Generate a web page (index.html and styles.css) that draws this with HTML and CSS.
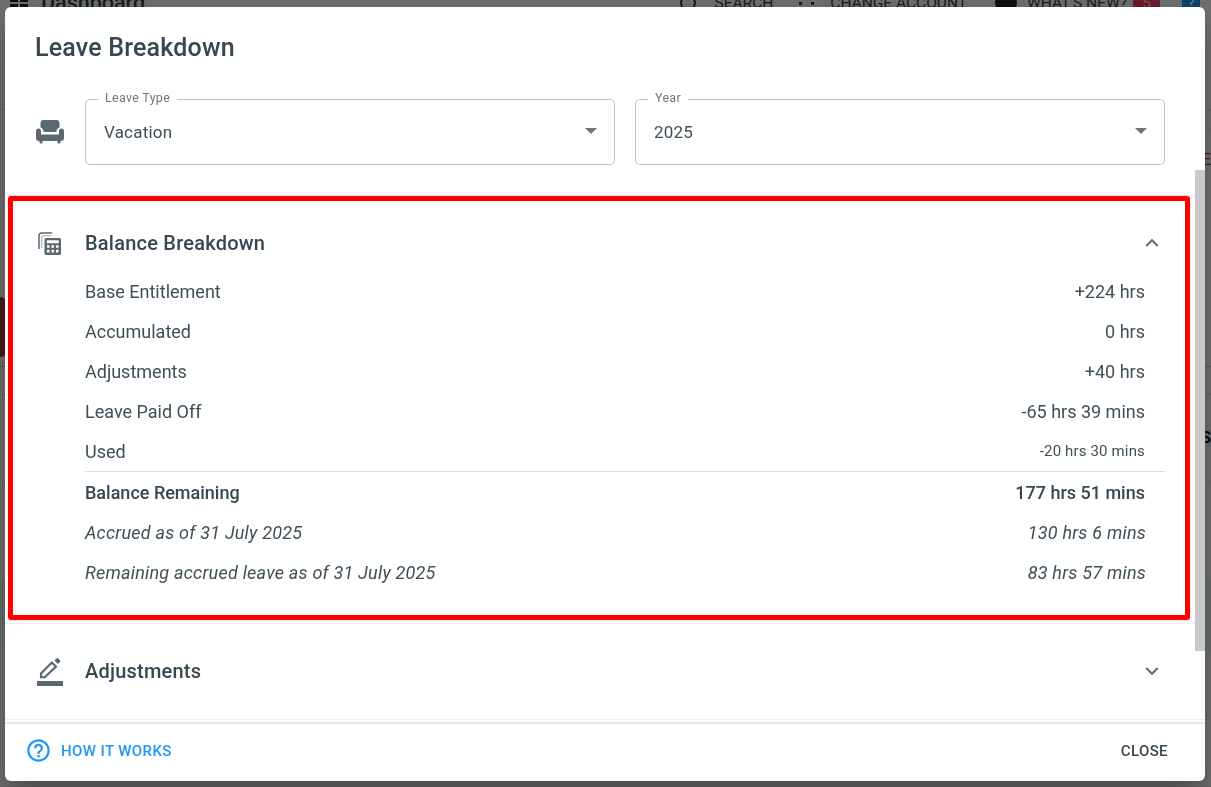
FILE: index.html
```html
<!DOCTYPE html>
<html lang="en">
<head>
<meta charset="utf-8">
<title>Leave Breakdown</title>
<link rel="stylesheet" href="styles.css">
</head>
<body>
<div class="page">
  <header class="topbar">
    <div class="brand">
      <svg class="brand-icon" viewBox="0 0 24 24"><path d="M3 3h8v8H3zM13 3h8v3h-8zM13 8h8v3h-8zM3 13h8v8H3zM13 13h8v8h-8z"/></svg>
      <span class="brand-name">Dashboard</span>
    </div>
    <nav class="top-nav">
      <span class="nav-item"><span class="ring"></span>SEARCH</span>
      <span class="nav-item"><span class="dots"></span>CHANGE ACCOUNT</span>
      <span class="nav-item"><span class="bell"></span>WHAT'S NEW?<span class="badge">5</span></span>
      <span class="help-square">?</span>
    </nav>
  </header>
  <div class="page-body">
    <div class="strip strip-a"></div>
    <div class="strip strip-b"><span class="blob"></span><span class="edge-letter">E</span></div>
    <div class="strip strip-c"></div>
    <div class="strip strip-d"><span class="edge-letter dark">S</span></div>
    <div class="strip strip-e"></div>
  </div>
</div>
<div class="backdrop"></div>

<section class="dialog">
  <h1 class="dialog-title">Leave Breakdown</h1>
  <div class="dialog-body">
    <div class="filters">
      <svg class="lead-icon" viewBox="0 0 30 30">
        <path d="M8.500 3h13a3 3 0 0 1 3 3v4.600a4.500 4.500 0 0 0-3 4.200v.2h-13v-.2a4.500 4.500 0 0 0-3-4.200V6a3 3 0 0 1 3-3z"/>
        <path d="M3.500 11.500A2.500 2.500 0 0 1 6 14v3.500h18V14a2.500 2.500 0 0 1 5 0v7a3 3 0 0 1-3 3h-.5v1.500a1 1 0 0 1-1 1h-1a1 1 0 0 1-1-1V24H7.500v1.500a1 1 0 0 1-1 1h-1a1 1 0 0 1-1-1V24H4a3 3 0 0 1-3-3v-7a2.500 2.500 0 0 1 2.500-2.500z"/>
      </svg>
      <div class="field">
        <span class="field-label">Leave Type</span>
        <span class="field-value">Vacation</span>
        <span class="caret"></span>
      </div>
      <div class="field">
        <span class="field-label">Year</span>
        <span class="field-value">2025</span>
        <span class="caret"></span>
      </div>
    </div>

    <div class="section">
      <div class="section-head open">
        <svg class="lead-icon calc" viewBox="0 0 26 26">
          <path class="calc-back" d="M15 3H4.500A2.500 2.500 0 0 0 2 5.500V19"/>
          <path class="calc-back thin" d="M14 5.800H6A1.200 1.200 0 0 0 4.800 7v11"/>
          <path fill-rule="evenodd" d="M9 8h13.500A1.500 1.500 0 0 1 24 9.500v14a1.500 1.500 0 0 1-1.500 1.500H9a1.500 1.500 0 0 1-1.500-1.500v-14A1.500 1.500 0 0 1 9 8zM9.800 10.200v3h12v-3zM10 15.200v2.500h2.500v-2.500zM14.500 15.200v2.500H17v-2.500zM19 15.200v2.500h2.500v-2.500zM10 19.700v2.800h2.500v-2.800zM14.500 19.700v2.800H17v-2.800zM19 19.700v2.800h2.500v-2.800z"/>
        </svg>
        <h2 class="section-title">Balance Breakdown</h2>
        <svg class="chevron" viewBox="0 0 24 24"><path d="M12 8l-6 6 1.410 1.410L12 10.830l4.590 4.580L18 14z"/></svg>
      </div>
      <div class="rows">
        <div class="row"><span>Base Entitlement</span><span>+224 hrs</span></div>
        <div class="row"><span>Accumulated</span><span>0 hrs</span></div>
        <div class="row"><span>Adjustments</span><span>+40 hrs</span></div>
        <div class="row"><span>Leave Paid Off</span><span>-65 hrs 39 mins</span></div>
        <div class="row"><span>Used</span><span class="small">-20 hrs 30 mins</span></div>
        <div class="row total"><span>Balance Remaining</span><span>177 hrs 51 mins</span></div>
        <div class="row note"><span>Accrued as of 31 July 2025</span><span>130 hrs 6 mins</span></div>
        <div class="row note"><span>Remaining accrued leave as of 31 July 2025</span><span>83 hrs 57 mins</span></div>
      </div>
    </div>

    <div class="section">
      <div class="section-head closed">
        <svg class="lead-icon" viewBox="0 0 24 24">
          <path d="M22.400 24H1.600v-4h20.800z"/>
          <path class="pen-outline" d="M13.500 5.200l3.300 3.300L7.800 17H4.800v-3z"/>
          <path d="M15.500 3.500l1.600-1.600a1 1 0 0 1 1.400 0l1.500 1.500a1 1 0 0 1 0 1.400l-1.600 1.600z"/>
        </svg>
        <h2 class="section-title">Adjustments</h2>
        <svg class="chevron" viewBox="0 0 24 24"><path d="M16.590 8.590L12 13.170 7.410 8.590 6 10l6 6 6-6z"/></svg>
      </div>
    </div>
  </div>
  <footer class="dialog-foot">
    <span class="how">
      <svg class="how-icon" viewBox="0 0 24 24"><path d="M11 18h2v-2h-2v2zm1-16C6.480 2 2 6.480 2 12s4.480 10 10 10 10-4.480 10-10S17.520 2 12 2zm0 18c-4.410 0-8-3.590-8-8s3.590-8 8-8 8 3.590 8 8-3.590 8-8 8zm0-14c-2.210 0-4 1.790-4 4h2c0-1.100.9-2 2-2s2 .9 2 2c0 2-3 1.750-3 5h2c0-2.250 3-2.500 3-5 0-2.210-1.790-4-4-4z"/></svg>
      HOW IT WORKS
    </span>
    <span class="close">CLOSE</span>
  </footer>
  <div class="scroll-thumb"></div>
  <div class="annotation"></div>
</section>
</body>
</html>
```
FILE: styles.css
```css
* { box-sizing: border-box; }
html, body { height: 100%; }
body {
  margin: 0;
  overflow: hidden;
  font-family: Roboto, "Liberation Sans", sans-serif;
  color: #37474f;
  background: #e2e2e2;
}
.page { display: flex; flex-direction: column; height: 787px; }
.topbar {
  display: flex;
  justify-content: space-between;
  align-items: center;
  height: 122px;
  margin-top: -12px;
  padding: 0 11px 92px 7px;
  border-bottom: 1px solid #c8c8c8;
  color: #2b3a42;
}
.brand { display: flex; align-items: center; gap: 10px; }
.brand-icon { width: 24px; height: 24px; fill: #16222a; }
.brand-name { font-size: 21.500px; font-weight: 500; }
.top-nav { display: flex; align-items: center; font-size: 15.500px; }
.nav-item { display: flex; align-items: center; gap: 18px; margin-right: 26px; }
.nav-item:nth-child(2) { gap: 16px; margin-right: 28px; }
.nav-item:nth-child(3) { gap: 10px; margin-right: 22px; }
.ring { width: 16px; height: 16px; border: 2px solid #2b3a42; border-radius: 50%; }
.dots { width: 15px; height: 16px; border-left: 3px dotted #2b3a42; border-right: 3px dotted #2b3a42; }
.bell { width: 22px; height: 18px; border-radius: 9px; background: #16222a; }
.badge { width: 27px; padding: 2px 0; margin-left: -4px; text-align: center; border-radius: 4px; color: #f3b3c0; background: #e0315c; }
.help-square { width: 18px; height: 18px; text-align: center; line-height: 18px; border-radius: 3px; color: #fff; background: #1a88d8; }

.page-body { display: flex; flex-direction: column; flex: 1; }
.strip { display: flex; justify-content: space-between; align-items: flex-start; border-bottom: 1px solid #d0d0d0; }
.strip-a { height: 20px; }
.strip-b { height: 237px; padding-top: 21px; border-bottom-color: #b8b8b8; }
.strip-c { height: 28px; border-bottom-color: #c8c8c8; }
.strip-d { height: 87px; align-items: center; justify-content: flex-end; }
.strip-e { flex: 1; background: linear-gradient(#e2e2e2 98px, #cfe0d8 98px, #cfe0d8 168px, #e2e2e2 168px); }
.edge-letter { font-size: 16px; line-height: 18px; color: #b02030; }
.edge-letter.dark { color: #111; font-weight: 700; }
.blob { width: 6px; height: 60px; margin-top: 146px; border-radius: 0 12px 12px 0; background: #943434; }

.backdrop { position: fixed; inset: 0; background: rgba(0, 0, 0, .5); }

.dialog {
  position: fixed;
  left: 5px;
  top: 7px;
  width: 1200px;
  height: 774px;
  display: flex;
  flex-direction: column;
  overflow: hidden;
  border-radius: 6px;
  background: #fff;
  box-shadow: 0 11px 15px -7px rgba(0,0,0,.2), 0 24px 38px 3px rgba(0,0,0,.14), 0 9px 46px 8px rgba(0,0,0,.12);
}
.dialog-title {
  flex: none;
  margin: 0;
  padding: 24px 30px 17px;
  font-size: 25px;
  line-height: 34px;
  font-weight: 500;
  letter-spacing: .2px;
}
.dialog-body { flex: 1; min-height: 0; overflow: hidden; padding-top: 17px; }

.filters { display: flex; align-items: center; gap: 20px; padding: 0 40px 30px 30px; border-bottom: 1px solid #eee; }
.lead-icon { flex: none; width: 30px; height: 30px; fill: #5c6870; }
.field {
  position: relative;
  flex: 1;
  display: flex;
  align-items: center;
  height: 66px;
  padding: 0 18px;
  border: 1px solid #c4c4c4;
  border-radius: 5px;
}
.field-label {
  position: absolute;
  left: 12px;
  top: -9px;
  padding: 0 7px;
  font-size: 12.500px;
  line-height: 14px;
  letter-spacing: .3px;
  color: #757575;
  background: #fff;
}
.field-value { font-size: 17px; letter-spacing: .2px; color: #3f4f57; }
.caret {
  position: absolute;
  right: 17px;
  top: 28px;
  border-left: 6px solid transparent;
  border-right: 6px solid transparent;
  border-top: 6px solid #757575;
}

.section { border-bottom: 1px solid #eee; padding: 0 40px 0 30px; }
.section-head { display: flex; align-items: center; gap: 20px; padding-top: 19px; }
.section-head.closed { padding-bottom: 20px; }
.section-title { flex: 1; margin: 0; font-size: 20px; line-height: 56px; font-weight: 500; letter-spacing: .22px; }
.chevron { flex: none; width: 26px; height: 26px; fill: #6d6d6d; }
.lead-icon.calc { width: 26px; height: 26px; margin: 0 2px; }
.calc-back { fill: none; stroke: #5c6870; stroke-width: 1.500; }
.calc-back.thin { stroke-width: 1; opacity: .6; }
.pen-outline { fill: none; stroke: #5c6870; stroke-width: 1.700; }

.rows { padding: 0 0 31px 50px; }
.row {
  display: flex;
  justify-content: space-between;
  align-items: center;
  height: 40px;
  padding-right: 20px;
  font-size: 18px;
  color: #3f4f57;
}
.row .small { font-size: 15px; letter-spacing: .15px; }
.row.total { height: 41px; padding-top: 1px; border-top: 1px solid #ddd; font-weight: 500; color: #37474f; }
.row.note { padding-right: 19px; font-style: italic; letter-spacing: .22px; }

.dialog-foot {
  flex: none;
  display: flex;
  justify-content: space-between;
  align-items: center;
  height: 59px;
  padding: 0 37px 4px 20px;
  border-top: 2px solid #e4e4e4;
  font-size: 15px;
  font-weight: 500;
  letter-spacing: .4px;
}
.how { display: flex; align-items: center; gap: 9px; color: #2196f3; }
.how-icon { width: 27px; height: 27px; fill: #2196f3; }
.close { color: #37474f; }

.scroll-thumb { position: absolute; left: 1190px; top: 163px; width: 10px; height: 481px; background: #c9c9c9; }
.annotation {
  position: absolute;
  left: 3px;
  top: 189px;
  width: 1182px;
  height: 424px;
  border: 5px solid #f00;
  border-radius: 3px;
  box-shadow: 0 0 2px rgba(255, 0, 0, .25);
}
```
